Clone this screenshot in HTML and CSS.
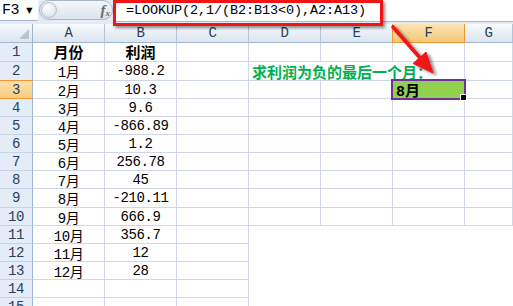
FILE: index.html
```html
<!DOCTYPE html>
<html lang="zh-CN">
<head>
    <meta charset="UTF-8">
    <title>LOOKUP 求最后一个负利润月份</title>
    <link rel="stylesheet" href="styles.css">
</head>
<body>

    <div class="barra">
        <div class="namebox"><span>F3</span><span class="seta">▼</span></div>
        <div class="fxzone">
            <span class="knob"></span>
            <span class="fx">f<sub>x</sub></span>
        </div>
        <div class="formula">=LOOKUP(2,1/(B2:B13&lt;0),A2:A13)</div>
    </div>

    <div class="sheet">
        <div class="canto"></div><div class="ch">A</div><div class="ch">B</div><div class="ch">C</div><div class="ch">D</div><div class="ch">E</div><div class="ch sel">F</div><div class="ch">G</div>

        <div class="rh">1</div><div class="c tit">月份</div><div class="c tit">利润</div><div class="c"></div><div class="c"></div><div class="c"></div><div class="c"></div><div class="c"></div>
        <div class="rh">2</div><div class="c">1月</div><div class="c">-988.2</div><div class="c"></div><div class="c nota">求利润为负的最后一个月：</div><div class="c"></div>
        <div class="rh sel">3</div><div class="c">2月</div><div class="c">10.3</div><div class="c"></div><div class="c"></div><div class="c"></div><div class="c ativa">8月</div><div class="c"></div>
        <div class="rh">4</div><div class="c">3月</div><div class="c">9.6</div><div class="c"></div><div class="c"></div><div class="c"></div><div class="c"></div><div class="c"></div>
        <div class="rh">5</div><div class="c">4月</div><div class="c">-866.89</div><div class="c"></div><div class="c"></div><div class="c"></div><div class="c"></div><div class="c"></div>
        <div class="rh">6</div><div class="c">5月</div><div class="c">1.2</div><div class="c"></div><div class="c"></div><div class="c"></div><div class="c"></div><div class="c"></div>
        <div class="rh">7</div><div class="c">6月</div><div class="c">256.78</div><div class="c"></div><div class="c"></div><div class="c"></div><div class="c"></div><div class="c"></div>
        <div class="rh">8</div><div class="c">7月</div><div class="c">45</div><div class="c"></div><div class="c"></div><div class="c"></div><div class="c"></div><div class="c"></div>
        <div class="rh">9</div><div class="c">8月</div><div class="c">-210.11</div><div class="c"></div><div class="c"></div><div class="c"></div><div class="c"></div><div class="c"></div>
        <div class="rh">10</div><div class="c">9月</div><div class="c">666.9</div><div class="c"></div><div class="c"></div><div class="c"></div><div class="c"></div><div class="c"></div>
        <div class="rh">11</div><div class="c">10月</div><div class="c">356.7</div><div class="c"></div><div class="c vazio"></div><div class="c vazio"></div><div class="c vazio"></div><div class="c vazio"></div>
        <div class="rh">12</div><div class="c">11月</div><div class="c">12</div><div class="c"></div><div class="c vazio"></div><div class="c vazio"></div><div class="c vazio"></div><div class="c vazio"></div>
        <div class="rh">13</div><div class="c">12月</div><div class="c">28</div><div class="c"></div><div class="c vazio"></div><div class="c vazio"></div><div class="c vazio"></div><div class="c vazio"></div>
        <div class="rh">14</div><div class="c"></div><div class="c"></div><div class="c"></div><div class="c vazio"></div><div class="c vazio"></div><div class="c vazio"></div><div class="c vazio"></div>
        <div class="rh">15</div><div class="c"></div><div class="c"></div><div class="c"></div><div class="c vazio"></div><div class="c vazio"></div><div class="c vazio"></div><div class="c vazio"></div>
    </div>

    <!-- marcações em vermelho por cima da planilha -->
    <div class="destaque"></div>
    <svg class="flecha" width="513" height="306" viewBox="0 0 513 306">
        <defs>
            <filter id="sombra" x="-50%" y="-50%" width="200%" height="200%">
                <feDropShadow dx="3" dy="2" stdDeviation="1.6" flood-color="#000" flood-opacity="0.45"/>
            </filter>
        </defs>
        <g filter="url(#sombra)" fill="#f01414" stroke="#f01414">
            <line x1="393" y1="27" x2="421" y2="59" stroke-width="3.6" stroke-linecap="round"/>
            <polygon points="433,73 413,63.5 426,52" stroke-width="1" stroke-linejoin="round"/>
        </g>
    </svg>

</body>
</html>
```

FILE: styles.css
```css
body {
    margin: 0;
    width: 513px;
    height: 306px;
    overflow: hidden;
    position: relative;
    background-color: #fff;
    font-family: "Liberation Mono", "Noto Sans CJK SC", monospace;
    font-size: 14px;
    letter-spacing: -0.4px;
    color: #000;
}
.barra {
    display: flex;
    height: 24px;
    background-color: #e4ebf4;
}
.namebox {
    width: 38px;
    height: 21px;
    box-sizing: border-box;
    display: flex;
    align-items: center;
    gap: 7px;
    padding-left: 2px;
    background-color: #fff;
    border-bottom: 1px solid #a7b7c9;
    font-size: 15px;
}
.seta {
    font-family: "DejaVu Sans", sans-serif;
    font-size: 8px;
    color: #000;
}
.fxzone {
    width: 74px;
    height: 20px;
    margin-left: 1px;
    display: flex;
    align-items: center;
    justify-content: space-between;
    padding: 0 2px 0 1px;
    box-sizing: border-box;
    border: 1px solid #a9b6c6;
    border-radius: 10px;
    background: linear-gradient(#f4f6f9, #dde3eb);
}
.knob {
    width: 14px;
    height: 14px;
    border-radius: 50%;
    border: 1px solid #b5c0cc;
    background: radial-gradient(circle at 40% 35%, #fff, #d4dbe4);
}
.fx {
    font-family: "Liberation Serif", serif;
    font-style: italic;
    font-weight: bold;
    font-size: 15px;
    color: #6b6b6b;
    letter-spacing: 0;
}
.fx sub {
    font-size: 9px;
    vertical-align: -1px;
}
.formula {
    flex: 1;
    height: 21px;
    padding-left: 13px;
    line-height: 21px;
    background-color: #fff;
    border-bottom: 1px solid #a7b7c9;
    font-size: 13.5px;
    letter-spacing: -0.1px;
}
.sheet {
    display: grid;
    grid-template-columns: 33px repeat(6, 72px) 1fr;
    grid-template-rows: 19px 19px 19px 18px 18px 18px 18px 18px 18px 19px 18px 18px 18px 18px 18px 18px;
}
.sheet > div {
    box-sizing: border-box;
    display: flex;
    align-items: center;
    justify-content: center;
    white-space: nowrap;
}
.canto {
    position: relative;
    background: linear-gradient(#f7f9fc, #dde5ef);
    border-right: 1px solid #9eb6ce;
    border-bottom: 1px solid #9eb6ce;
}
.canto::after {
    content: "";
    position: absolute;
    right: 3px;
    bottom: 3px;
    border-left: 10px solid transparent;
    border-bottom: 10px solid #b8c5d5;
}
.ch {
    background: linear-gradient(#f8fafd, #dce4ee);
    border-right: 1px solid #b3c4d7;
    border-bottom: 1px solid #9eb6ce;
    font-size: 14px;
    color: #27405f;
}
.ch.sel {
    background: linear-gradient(#fbe3b4, #f3c978);
    border-right-color: #f29536;
    border-bottom-color: #f29536;
    box-shadow: -1px 0 0 #f29536;
}
.rh {
    background-color: #e4ecf7;
    border-right: 1px solid #9eb6ce;
    border-bottom: 1px solid #c5d3e3;
    font-size: 14px;
    color: #27405f;
}
.rh.sel {
    background: linear-gradient(#fbe0ab, #f6cd80);
    border-bottom-color: #f29536;
    box-shadow: 0 -1px 0 #f29536;
}
.c {
    border-right: 1px solid #d0d7e5;
    border-bottom: 1px solid #d0d7e5;
}
.c.vazio {
    border-color: #fff;
}
.tit {
    font-weight: bold;
    font-size: 15px;
    letter-spacing: 0;
}
.sheet > .nota {
    grid-column: span 3;
    justify-content: flex-start;
    padding-left: 3px;
    font-family: "Noto Sans CJK SC", sans-serif;
    font-weight: bold;
    font-size: 15px;
    letter-spacing: 0;
    color: #00b050;
}
.sheet > .ativa {
    position: relative;
    justify-content: flex-start;
    padding-left: 3px;
    background-color: #92d050;
    font-weight: bold;
    font-size: 15px;
    letter-spacing: 0;
}
.ativa::after {
    content: "";
    position: absolute;
    top: -2px;
    left: -2px;
    right: -2px;
    bottom: -2px;
    border: 2px solid #7030a0;
}
.ativa::before {
    content: "";
    position: absolute;
    right: -3px;
    bottom: -3px;
    width: 5px;
    height: 5px;
    background-color: #000;
    border: 1px solid #fff;
    z-index: 2;
}
.destaque {
    position: absolute;
    left: 113px;
    top: 0;
    width: 270px;
    height: 26px;
    box-sizing: border-box;
    border: 3px solid #f01414;
    box-shadow: 2px 2px 3px rgba(0, 0, 0, 0.45);
}
.flecha {
    position: absolute;
    left: 0;
    top: 0;
    pointer-events: none;
}
```
